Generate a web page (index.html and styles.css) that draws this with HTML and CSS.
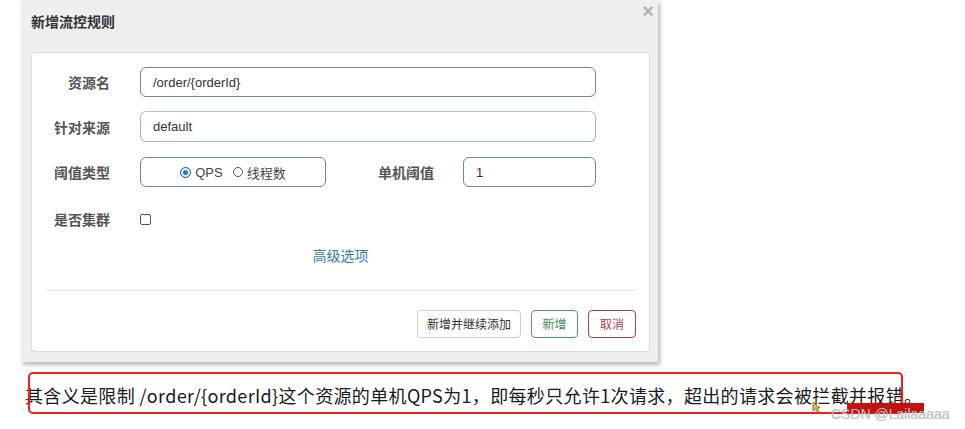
FILE: index.html
```html
<!DOCTYPE html>
<html lang="zh-CN">
<head>
<meta charset="utf-8">
<title>新增流控规则</title>
<link rel="stylesheet" href="styles.css">
</head>
<body>
<div class="modal">
  <div class="modal-header">
    <span class="title">新增流控规则</span>
    <span class="close">×</span>
  </div>
  <div class="panel">
    <div class="row row1">
      <span class="lbl">资源名</span>
      <div class="input wide dark">/order/{orderId}</div>
    </div>
    <div class="row row2">
      <span class="lbl">针对来源</span>
      <div class="input wide light">default</div>
    </div>
    <div class="row row3">
      <span class="lbl">阈值类型</span>
      <div class="radio-group">
        <span class="radio checked"></span><span class="rtext">QPS</span>
        <span class="radio"></span><span class="rtext">线程数</span>
      </div>
      <span class="lbl lbl2">单机阈值</span>
      <div class="input narrow dark">1</div>
    </div>
    <div class="row row4">
      <span class="lbl">是否集群</span>
      <span class="checkbox"></span>
    </div>
    <div class="adv"><span class="link">高级选项</span></div>
    <div class="divider"></div>
    <div class="actions">
      <span class="btn btn-default">新增并继续添加</span>
      <span class="btn btn-green">新增</span>
      <span class="btn btn-red">取消</span>
    </div>
  </div>
</div>
<p class="note">其含义是限制 /order/{orderId}这个资源的单机QPS为1，即每秒只允许1次请求，超出的请求会被拦截并报错。</p>
<div class="annot"></div>
<div class="wm-band"></div>
<div class="wm">CSDN @Lailaaaaa</div>
<svg class="cursor" width="9" height="12" viewBox="0 0 9 12"><path d="M1 1 L1 10 L3.5 7.8 L5.5 11 L6.8 10.3 L5 7 L8 7 Z" fill="#d8c23a" stroke="#6a5a10" stroke-width="0.7"/></svg>
</body>
</html>
```
FILE: styles.css
```css
html, body {
  margin: 0;
  padding: 0;
  background: #ffffff;
}
body {
  width: 965px;
  height: 429px;
  position: relative;
  overflow: hidden;
  font-family: "Liberation Sans", "Noto Sans CJK SC", sans-serif;
}
.modal {
  margin-left: 21px;
  width: 637px;
  height: 362px;
  background: #efefef;
  box-shadow: 2px 3px 4px rgba(0, 0, 0, 0.28);
  box-sizing: border-box;
  padding-top: 1px;
}
.modal-header {
  height: 51px;
  display: flex;
  justify-content: space-between;
  align-items: flex-start;
  padding: 0 4px 0 10px;
}
.title {
  margin-top: 10px;
  font-size: 14px;
  font-weight: bold;
  color: #333;
  line-height: 20px;
  font-family: "Noto Sans CJK SC", sans-serif;
}
.close {
  margin-top: 1px;
  font-size: 20px;
  font-weight: bold;
  color: #b0b0b0;
  line-height: 18px;
}
.panel {
  margin: 0 8px 0 10px;
  height: 300px;
  box-sizing: border-box;
  background: #fff;
  border: 1px solid #dcdcdc;
  border-radius: 4px;
  padding-top: 14px;
}
.row {
  display: flex;
  align-items: center;
  height: 30px;
}
.row2 { margin-top: 14px; height: 31px; }
.row3 { margin-top: 15px; }
.row4 { margin-top: 17px; }
.lbl {
  width: 78px;
  text-align: right;
  margin-right: 30px;
  font-size: 14px;
  font-weight: bold;
  color: #555;
  font-family: "Noto Sans CJK SC", sans-serif;
}
.lbl2 {
  width: 108px;
  margin-right: 29px;
}
.input {
  height: 100%;
  box-sizing: border-box;
  border-radius: 6px;
  font-size: 13px;
  color: #333;
  padding-left: 12px;
  display: flex;
  align-items: center;
}
.input.dark { border: 1px solid #6f88a6; }
.input.light { border: 1px solid #9fb5d2; border-top-color: #a9c2e2; }
.wide { width: 456px; }
.narrow { width: 133px; }
.radio-group {
  width: 186px;
  height: 30px;
  box-sizing: border-box;
  border: 1px solid #6f88a6;
  border-radius: 6px;
  display: flex;
  align-items: center;
  justify-content: center;
  font-size: 13px;
  color: #444;
}
.radio {
  width: 10px;
  height: 10px;
  border: 1px solid #555;
  border-radius: 50%;
  box-sizing: border-box;
  margin-right: 4px;
}
.radio.checked {
  width: 11px;
  height: 11px;
  border: 1px solid #1a66d8;
  background: #1a73e8;
  box-shadow: inset 0 0 0 2px #fff;
}
.rtext {
  margin-right: 10px;
  font-family: "Liberation Sans", "Noto Sans CJK SC", sans-serif;
}
.rtext:last-child { margin-right: 0; }
.checkbox {
  width: 11px;
  height: 11px;
  box-sizing: border-box;
  border: 1px solid #555;
  border-radius: 2px;
}
.adv {
  margin-top: 11px;
  text-align: center;
  line-height: 20px;
  height: 20px;
}
.link {
  font-size: 14px;
  color: #3a78b5;
  font-family: "Noto Sans CJK SC", sans-serif;
}
.divider {
  margin: 25px 13px 0 14px;
  border-top: 1px solid #e3e3e3;
}
.actions {
  margin: 19px 13px 0 0;
  display: flex;
  justify-content: flex-end;
  gap: 10px;
}
.btn {
  height: 28px;
  box-sizing: border-box;
  border-radius: 4px;
  font-size: 12px;
  line-height: 26px;
  text-align: center;
  font-family: "Noto Sans CJK SC", sans-serif;
}
.btn-default {
  width: 104px;
  border: 1px solid #d0d0d0;
  color: #333;
}
.btn-green {
  width: 47px;
  border: 1px solid #4f9a68;
  color: #3f8a58;
}
.btn-red {
  width: 48px;
  border: 1px solid #a8424e;
  color: #b0404e;
}
.note {
  margin: 20px 0 0 25px;
  font-family: "Noto Sans CJK SC", sans-serif;
  font-size: 18px;
  line-height: 26px;
  color: #1a1a1a;
  white-space: nowrap;
  letter-spacing: 0.34px;
}
.annot {
  position: absolute;
  left: 28px;
  top: 372px;
  width: 875px;
  height: 42px;
  box-sizing: border-box;
  border: 2px solid #f02020;
  border-radius: 5px;
}
.wm-band {
  position: absolute;
  left: 847px;
  top: 403px;
  width: 77px;
  height: 10px;
  background: #c4130f;
}
.wm {
  position: absolute;
  left: 831px;
  top: 406px;
  font-size: 14px;
  line-height: 16px;
  color: #c8c8c8;
  font-family: "Liberation Sans", sans-serif;
  text-shadow: 0 0 1px rgba(0, 0, 0, 0.25);
}
.cursor {
  position: absolute;
  left: 812px;
  top: 401px;
}
```
